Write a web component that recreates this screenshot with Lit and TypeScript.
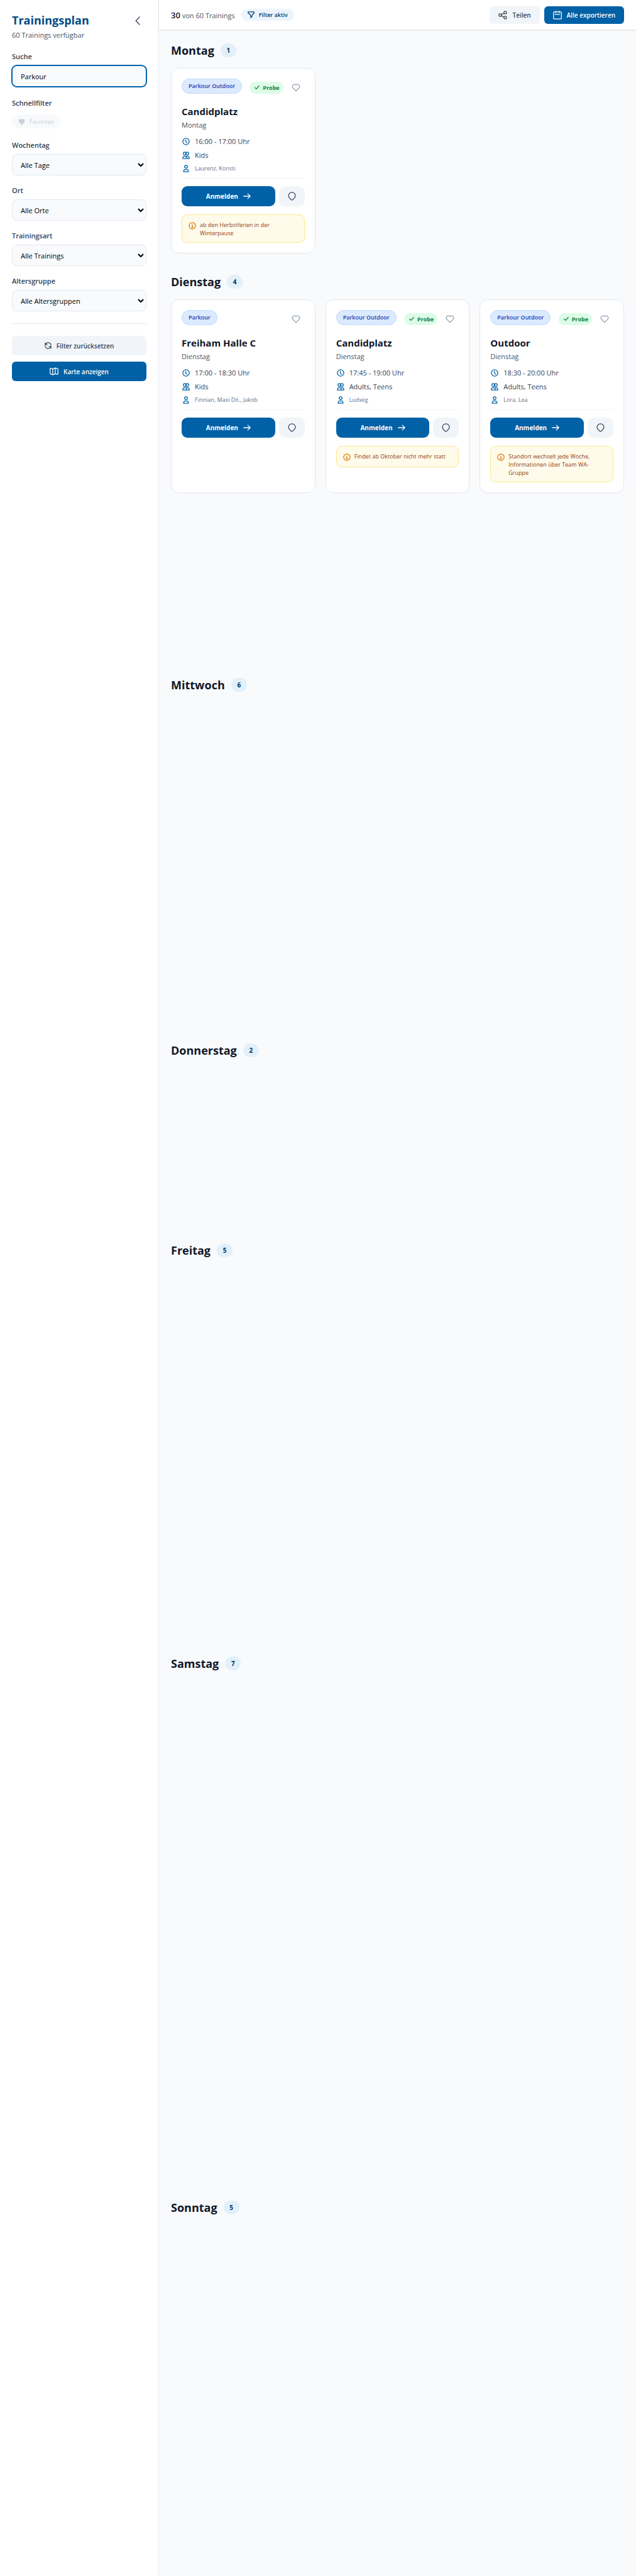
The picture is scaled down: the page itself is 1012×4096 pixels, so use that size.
import { LitElement, html, css, svg, nothing } from "lit";
import { customElement, property } from "lit/decorators.js";

interface Training {
  type: string;
  trial: boolean;
  place: string;
  time: string;
  ages: string;
  trainers: string;
  note?: string;
}

interface Day {
  name: string;
  count: number;
  trainings: Training[];
  pending: number;
}

const DAYS: Day[] = [
  {
    name: "Montag",
    count: 1,
    pending: 0,
    trainings: [
      {
        type: "Parkour Outdoor",
        trial: true,
        place: "Candidplatz",
        time: "16:00 - 17:00 Uhr",
        ages: "Kids",
        trainers: "Laurenz, Konsti",
        note: "ab den Herbstferien in der Winterpause",
      },
    ],
  },
  {
    name: "Dienstag",
    count: 4,
    pending: 244,
    trainings: [
      {
        type: "Parkour",
        trial: false,
        place: "Freiham Halle C",
        time: "17:00 - 18:30 Uhr",
        ages: "Kids",
        trainers: "Finnian, Maxi Dö., Jakob",
      },
      {
        type: "Parkour Outdoor",
        trial: true,
        place: "Candidplatz",
        time: "17:45 - 19:00 Uhr",
        ages: "Adults, Teens",
        trainers: "Ludwig",
        note: "Findet ab Oktober nicht mehr statt",
      },
      {
        type: "Parkour Outdoor",
        trial: true,
        place: "Outdoor",
        time: "18:30 - 20:00 Uhr",
        ages: "Adults, Teens",
        trainers: "Lora, Lea",
        note: "Standort wechselt jede Woche, Informationen über Team WA-Gruppe",
      },
    ],
  },
  { name: "Mittwoch", count: 6, trainings: [], pending: 508 },
  { name: "Donnerstag", count: 2, trainings: [], pending: 245 },
  { name: "Freitag", count: 5, trainings: [], pending: 584 },
  { name: "Samstag", count: 7, trainings: [], pending: 792 },
  { name: "Sonntag", count: 5, trainings: [], pending: 539 },
];

const FILTERS = [
  { id: "day", label: "Wochentag", option: "Alle Tage" },
  { id: "place", label: "Ort", option: "Alle Orte" },
  { id: "kind", label: "Trainingsart", option: "Alle Trainings" },
  { id: "age", label: "Altersgruppe", option: "Alle Altersgruppen" },
];

const ICONS = {
  chevron: { w: 8, h: 14, vw: 8, vh: 14, body: svg`<path d="M7 1 1.2 7 7 13" />` },
  share: {
    w: 14, h: 14, vw: 18, vh: 18,
    body: svg`<circle cx="3.8" cy="9" r="2.7" /><circle cx="14" cy="3.8" r="2.7" /><circle cx="14" cy="14.2" r="2.7" /><path d="m6.2 7.8 5.4-2.8M6.2 10.2l5.4 2.8" />`,
  },
  calendar: {
    w: 14, h: 14, vw: 18, vh: 18,
    body: svg`<rect x="1" y="2.4" width="16" height="14.6" rx="1.6" /><path d="M5.8.6v3.6M12.2.6v3.6M4.2 7.6h9.6" />`,
  },
  map: {
    w: 14, h: 13, vw: 18, vh: 16,
    body: svg`<path d="M1 2.8c0-.9.6-1.4 1.4-1.1L6.3 3l5-2 4.6 1.4c.7.2 1.1.7 1.1 1.4v9c0 .9-.6 1.4-1.4 1.1L11.3 13l-5 2-4.2-1.3c-.7-.2-1.1-.7-1.1-1.4zM6.3 3v12M11.3 1v12" />`,
  },
  refresh: {
    w: 11, h: 11, vw: 14, vh: 14,
    body: svg`<path d="M1.2 1.4v4h4M1.4 5.2A6 6 0 0 1 13 6.4M12.8 12.6v-4h-4M12.6 8.8A6 6 0 0 1 1 7.6" />`,
  },
  funnel: {
    w: 11, h: 11, vw: 14, vh: 14,
    body: svg`<path d="M1 1.2h12v2L9 8v2.4L6.4 13V8L1 3.2z" />`,
  },
  heart: {
    w: 14, h: 14, vw: 18, vh: 18,
    body: svg`<path d="M9 16.4 2.4 9.6A4.4 4.4 0 0 1 9 3.9a4.4 4.4 0 0 1 6.6 5.7z" />`,
  },
  heartSolid: {
    w: 11, h: 11, vw: 18, vh: 18,
    body: svg`<path d="M9 16.4 2.4 9.6A4.4 4.4 0 0 1 9 3.9a4.4 4.4 0 0 1 6.6 5.7z" />`,
  },
  check: { w: 8, h: 8, vw: 10, vh: 10, body: svg`<path d="m1 5.4 2.6 2.6L9 2.2" />` },
  clock: {
    w: 12, h: 12, vw: 15, vh: 15,
    body: svg`<circle cx="7.5" cy="7.5" r="6.4" /><path d="M7 4.2v3.4l2.4 2.6" />`,
  },
  users: {
    w: 12, h: 12, vw: 15, vh: 15,
    body: svg`<circle cx="5" cy="3.9" r="2.9" /><circle cx="10" cy="3.9" r="2.9" /><path d="M1 14c0-3 1.4-4.8 4-4.8S9 11 9 14zM7.4 10.2c.7-.7 1.5-1 2.6-1 2.6 0 4 1.8 4 4.8H9" />`,
  },
  user: {
    w: 12, h: 12, vw: 15, vh: 15,
    body: svg`<circle cx="7.5" cy="3.8" r="2.8" /><path d="M2.6 14c0-3 1.7-4.8 4.9-4.8s4.9 1.8 4.9 4.8z" />`,
  },
  arrow: { w: 12, h: 10, vw: 15, vh: 12, body: svg`<path d="M1 6h13M9 1.2 14 6l-5 4.8" />` },
  pin: {
    w: 13, h: 14, vw: 16, vh: 18,
    body: svg`<path d="M8 16.8c-.5 0-1-.2-1.4-.6C4.2 14 1 11.6 1 8a7 7 0 0 1 14 0c0 3.6-3.2 6-5.6 8.2-.4.4-.9.6-1.4.6z" />`,
  },
  info: {
    w: 12, h: 12, vw: 15, vh: 15,
    body: svg`<circle cx="7.5" cy="7.5" r="6.4" /><path d="M6.4 7h1.3v3.6M6.2 10.7h2.8M7.5 4.4v.4" />`,
  },
};

const icon = (name: keyof typeof ICONS, cls = "") => {
  const i = ICONS[name];
  return html`<svg
    class="icon ${cls}"
    width=${i.w}
    height=${i.h}
    viewBox="0 0 ${i.vw} ${i.vh}"
    aria-hidden="true"
  >${i.body}</svg>`;
};

const shared = css`
  * {
    box-sizing: border-box;
  }
  h1, h2, h3, p, ul {
    margin: 0;
    padding: 0;
  }
  button, input, select {
    font-family: inherit;
    margin: 0;
  }
  button {
    display: flex;
    align-items: center;
    justify-content: center;
    border: 0;
    padding: 0;
    cursor: pointer;
    white-space: nowrap;
  }
  .icon {
    display: block;
    flex: none;
    fill: none;
    stroke: currentColor;
    stroke-width: 1.6;
    stroke-linecap: round;
    stroke-linejoin: round;
  }
  .icon.solid {
    fill: currentColor;
  }
`;

@customElement("training-card")
export class TrainingCard extends LitElement {
  @property({ attribute: false }) training!: Training;
  @property() day = "";

  static styles = [
    shared,
    css`
      :host {
        display: block;
        box-sizing: border-box;
        padding: 16px;
        background: #fff;
        border: 1px solid #e2e8f0;
        border-radius: 13px;
      }
      .head {
        display: flex;
        align-items: flex-start;
        justify-content: space-between;
        height: 28px;
        margin-bottom: 13px;
      }
      .type {
        padding: 0 10px;
        border: 1px solid #bfdbfe;
        border-radius: 12px;
        background: #dbeafe;
        color: #1e40af;
        font-size: 9px;
        font-weight: 600;
        line-height: 22px;
        white-space: nowrap;
      }
      .actions {
        display: flex;
        align-items: center;
        gap: 6px;
      }
      .trial {
        display: flex;
        align-items: center;
        gap: 5px;
        padding: 0 6px 0 8px;
        border-radius: 10px;
        background: #dcfce7;
        color: #15803d;
        font-size: 9px;
        font-weight: 700;
        line-height: 19px;
      }
      .fav {
        width: 28px;
        height: 28px;
        background: none;
        color: #94a3b8;
      }
      .place {
        color: #0f172a;
        font-size: 15px;
        font-weight: 700;
        line-height: 22px;
      }
      .day {
        margin-top: 3px;
        color: #475569;
        font-size: 11px;
        line-height: 16px;
      }
      .facts {
        display: flex;
        flex-direction: column;
        gap: 4px;
        margin-top: 9px;
        padding-bottom: 7px;
        border-bottom: 1px solid #f1f5f9;
        list-style: none;
        color: #334155;
        font-size: 11px;
        line-height: 18px;
      }
      .fact {
        display: flex;
        align-items: center;
        gap: 8px;
        padding-left: 1px;
      }
      .fact .icon {
        color: #0061a6;
      }
      .trainers {
        color: #64748b;
        font-size: 9px;
        line-height: 16px;
      }
      .buttons {
        display: flex;
        gap: 6px;
        margin-top: 12px;
      }
      .join {
        flex: 1;
        gap: 8px;
        height: 32px;
        border-radius: 9px;
        background: #0061a6;
        color: #fff;
        font-size: 10px;
        font-weight: 700;
      }
      .locate {
        width: 41px;
        height: 32px;
        border-radius: 9px;
        background: #f1f5f9;
        color: #334155;
      }
      .note {
        display: flex;
        align-items: flex-start;
        gap: 6px;
        margin-top: 13px;
        padding: 8px 10px;
        min-height: 34px;
        border: 1px solid #fde68a;
        border-radius: 9px;
        background: #fffbeb;
        color: #92400e;
        font-size: 9px;
        font-weight: 500;
        line-height: 13px;
      }
      .note .icon {
        margin-top: 3px;
        color: #d97706;
      }
      .note p {
        margin-top: 1px;
      }
    `,
  ];

  render() {
    const t = this.training;
    return html`
      <div class="head">
        <span class="type">${t.type}</span>
        <div class="actions">
          ${t.trial ? html`<span class="trial">${icon("check")}Probe</span>` : nothing}
          <button class="fav" type="button" aria-label="Favorit">${icon("heart")}</button>
        </div>
      </div>
      <h3 class="place">${t.place}</h3>
      <p class="day">${this.day}</p>
      <ul class="facts">
        <li class="fact">${icon("clock")}${t.time}</li>
        <li class="fact">${icon("users")}${t.ages}</li>
        <li class="fact trainers">${icon("user")}${t.trainers}</li>
      </ul>
      <div class="buttons">
        <button class="join" type="button">Anmelden${icon("arrow")}</button>
        <button class="locate" type="button" aria-label="Ort">${icon("pin")}</button>
      </div>
      ${t.note ? html`<div class="note">${icon("info")}<p>${t.note}</p></div>` : nothing}
    `;
  }
}

@customElement("filter-panel")
export class FilterPanel extends LitElement {
  static styles = [
    shared,
    css`
      :host {
        display: block;
        box-sizing: border-box;
        padding: 19px;
        background: #fff;
        border-right: 1px solid #e2e8f0;
      }
      .head {
        display: flex;
        justify-content: space-between;
        align-items: flex-start;
        margin-bottom: 20px;
      }
      .title {
        color: #004b84;
        font-size: 18px;
        font-weight: 700;
        line-height: 26px;
      }
      .sub {
        margin-top: 3px;
        color: #475569;
        font-size: 11px;
        line-height: 15px;
      }
      .collapse {
        width: 28px;
        height: 28px;
        background: none;
        color: #475569;
      }
      .fields {
        display: flex;
        flex-direction: column;
        gap: 17px;
        padding-bottom: 19px;
        border-bottom: 1px solid #e2e8f0;
      }
      .field {
        display: flex;
        flex-direction: column;
        gap: 8px;
      }
      .quick {
        align-items: flex-start;
        gap: 12px;
        padding: 2px 0 3px;
      }
      .label {
        color: #334155;
        font-size: 11px;
        font-weight: 600;
        line-height: 13px;
      }
      .control {
        width: 100%;
        height: 34px;
        border: 1px solid #e2e8f0;
        border-radius: 8px;
        background: #f8fafc;
        color: #000;
        font-size: 11px;
        outline: none;
      }
      .search {
        padding: 0 13px;
        border-color: #0061a6;
        box-shadow: 0 0 0 1px #0061a6;
      }
      .select {
        padding: 0 0 0 9px;
      }
      .chip {
        gap: 7px;
        height: 22px;
        padding: 0 10px;
        border-radius: 11px;
        background: #f1f5f9;
        color: #94a3b8;
        font-size: 9px;
        font-weight: 500;
        opacity: 0.5;
      }
      .buttons {
        display: flex;
        flex-direction: column;
        gap: 10px;
        padding-top: 19px;
      }
      .button {
        gap: 8px;
        height: 31px;
        border-radius: 6px;
        background: #f1f5f9;
        color: #334155;
        font-size: 10px;
        font-weight: 600;
      }
      .primary {
        background: #0061a6;
        color: #fff;
      }
    `,
  ];

  render() {
    return html`
      <header class="head">
        <div>
          <h1 class="title">Trainingsplan</h1>
          <p class="sub">60 Trainings verfügbar</p>
        </div>
        <button class="collapse" type="button" aria-label="Filter einklappen">${icon("chevron")}</button>
      </header>
      <div class="fields">
        <div class="field">
          <label class="label" for="search">Suche</label>
          <input class="control search" id="search" type="text" value="Parkour" />
        </div>
        <div class="field quick">
          <span class="label">Schnellfilter</span>
          <button class="chip" type="button" disabled>${icon("heartSolid", "solid")}Favoriten</button>
        </div>
        ${FILTERS.map(
          (f) => html`<div class="field">
            <label class="label" for=${f.id}>${f.label}</label>
            <select class="control select" id=${f.id}>
              <option>${f.option}</option>
            </select>
          </div>`
        )}
      </div>
      <div class="buttons">
        <button class="button" type="button">${icon("refresh")}Filter zurücksetzen</button>
        <button class="button primary" type="button">${icon("map")}Karte anzeigen</button>
      </div>
    `;
  }
}

@customElement("app-root")
export class AppRoot extends LitElement {
  static styles = [
    shared,
    css`
      :host {
        display: grid;
        grid-template-columns: 253px minmax(0, 1fr);
        min-height: 100vh;
        background: #f8fafc;
        font-family: "Open Sans", "Noto Sans", sans-serif;
      }
      .bar {
        display: flex;
        align-items: center;
        justify-content: space-between;
        height: 48px;
        padding: 0 19px;
        background: #fff;
        border-bottom: 1px solid #e2e8f0;
        box-shadow: 0 1px 2px rgba(15, 23, 42, 0.06);
      }
      .summary, .tools {
        display: flex;
        align-items: center;
      }
      .summary {
        gap: 10px;
      }
      .tools {
        gap: 7px;
      }
      .total {
        color: #475569;
        font-size: 11px;
        font-weight: 500;
      }
      .shown {
        color: #0f172a;
        font-size: 13px;
        font-weight: 600;
      }
      .active {
        display: flex;
        align-items: center;
        gap: 7px;
        padding: 0 10px;
        border-radius: 10px;
        background: #edf5fc;
        color: #003b6b;
        font-size: 9px;
        font-weight: 600;
        line-height: 19px;
      }
      .tool {
        gap: 8px;
        height: 28px;
        padding: 0 14px;
        border-radius: 6px;
        background: #f1f5f9;
        color: #334155;
        font-size: 10px;
        font-weight: 600;
      }
      .primary {
        background: #0061a6;
        color: #fff;
      }
      .days {
        display: flex;
        flex-direction: column;
        gap: 32px;
        padding: 19px;
      }
      .dayhead {
        display: flex;
        align-items: center;
        gap: 10px;
        margin-bottom: 15px;
      }
      .dayname {
        color: #0f172a;
        font-size: 18px;
        font-weight: 700;
        line-height: 26px;
      }
      .count {
        min-width: 25px;
        border-radius: 11px;
        background: #e2f0fa;
        color: #00305a;
        font-size: 10px;
        font-weight: 700;
        line-height: 22px;
        text-align: center;
      }
      .cards {
        display: grid;
        grid-template-columns: repeat(auto-fill, minmax(220px, 1fr));
        gap: 16px;
      }
      .pending {
        grid-column: 1 / -1;
      }
    `,
  ];

  render() {
    return html`
      <filter-panel></filter-panel>
      <main>
        <div class="bar">
          <div class="summary">
            <span class="total"><span class="shown">30</span> von 60 Trainings</span>
            <span class="active">${icon("funnel")}Filter aktiv</span>
          </div>
          <div class="tools">
            <button class="tool" type="button">${icon("share")}Teilen</button>
            <button class="tool primary" type="button">${icon("calendar")}Alle exportieren</button>
          </div>
        </div>
        <div class="days">
          ${DAYS.map(
            (d) => html`<section>
              <div class="dayhead">
                <h2 class="dayname">${d.name}</h2>
                <span class="count">${d.count}</span>
              </div>
              <div class="cards">
                ${d.trainings.map(
                  (t) => html`<training-card .training=${t} .day=${d.name}></training-card>`
                )}
                ${d.pending
                  ? html`<div class="pending" style="height: ${d.pending}px"></div>`
                  : nothing}
              </div>
            </section>`
          )}
        </div>
      </main>
    `;
  }
}
